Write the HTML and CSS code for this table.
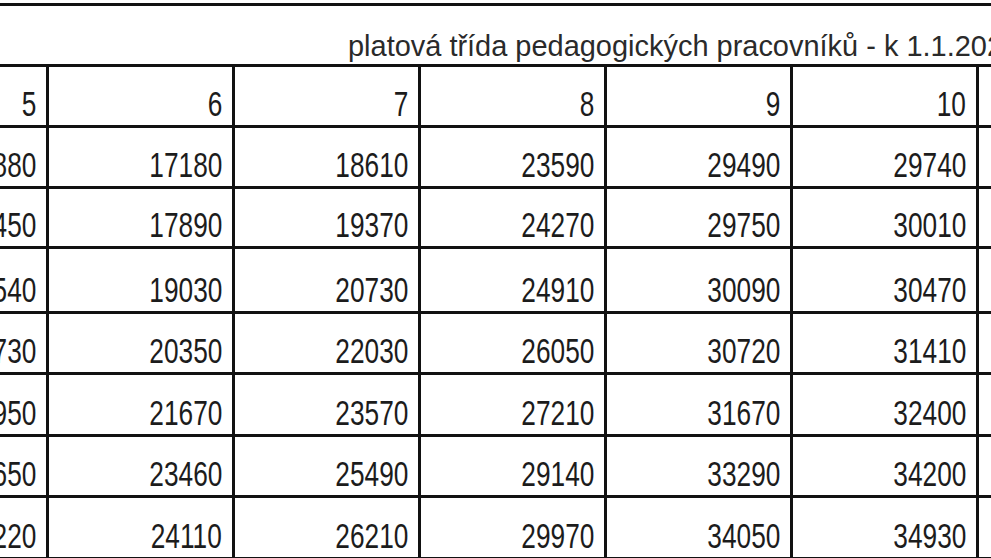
FILE: index.html
```html
<!DOCTYPE html>
<html lang="cs">
<head>
<meta charset="utf-8">
<title>Platové třídy</title>
<link rel="stylesheet" href="styles.css">
</head>
<body>
<div class="sheet">
  <div class="title"><span class="ttext">platová třída pedagogických pracovníků - k 1.1.2024</span></div>

  <div class="row r-head">
    <div class="c"><span>5</span></div><div class="c"><span>6</span></div><div class="c"><span>7</span></div><div class="c"><span>8</span></div><div class="c"><span>9</span></div><div class="c"><span>10</span></div><div class="c"><span>11</span></div>
  </div>
  <div class="row r1">
    <div class="c"><span>15880</span></div><div class="c"><span>17180</span></div><div class="c"><span>18610</span></div><div class="c"><span>23590</span></div><div class="c"><span>29490</span></div><div class="c"><span>29740</span></div><div class="c"><span>31070</span></div>
  </div>
  <div class="row r2">
    <div class="c"><span>16450</span></div><div class="c"><span>17890</span></div><div class="c"><span>19370</span></div><div class="c"><span>24270</span></div><div class="c"><span>29750</span></div><div class="c"><span>30010</span></div><div class="c"><span>31400</span></div>
  </div>
  <div class="row r3">
    <div class="c"><span>17540</span></div><div class="c"><span>19030</span></div><div class="c"><span>20730</span></div><div class="c"><span>24910</span></div><div class="c"><span>30090</span></div><div class="c"><span>30470</span></div><div class="c"><span>31900</span></div>
  </div>
  <div class="row r4">
    <div class="c"><span>18730</span></div><div class="c"><span>20350</span></div><div class="c"><span>22030</span></div><div class="c"><span>26050</span></div><div class="c"><span>30720</span></div><div class="c"><span>31410</span></div><div class="c"><span>32980</span></div>
  </div>
  <div class="row r5">
    <div class="c"><span>19950</span></div><div class="c"><span>21670</span></div><div class="c"><span>23570</span></div><div class="c"><span>27210</span></div><div class="c"><span>31670</span></div><div class="c"><span>32400</span></div><div class="c"><span>34020</span></div>
  </div>
  <div class="row r6">
    <div class="c"><span>21650</span></div><div class="c"><span>23460</span></div><div class="c"><span>25490</span></div><div class="c"><span>29140</span></div><div class="c"><span>33290</span></div><div class="c"><span>34200</span></div><div class="c"><span>35880</span></div>
  </div>
  <div class="row r7">
    <div class="c"><span>22220</span></div><div class="c"><span>24110</span></div><div class="c"><span>26210</span></div><div class="c"><span>29970</span></div><div class="c"><span>34050</span></div><div class="c"><span>34930</span></div><div class="c"><span>36650</span></div>
  </div>
</div>
</body>
</html>
```

FILE: styles.css
```css
html, body {
  margin: 0;
  padding: 0;
  background: #ffffff;
  overflow: hidden;
  width: 991px;
  height: 558px;
}

.sheet {
  margin-top: 3px;
  width: 1200px;
  border-top: 3px solid #111111;
  font-family: "Liberation Sans", Arial, sans-serif;
  color: #1c1c1c;
}

.title {
  height: 61px;
  box-sizing: border-box;
  border-bottom: 3px solid #111111;
  display: flex;
  align-items: flex-end;
  padding-left: 348px;
  white-space: nowrap;
  overflow: hidden;
}

.ttext {
  display: inline-block;
  font-size: 30px;
  line-height: normal;
  padding-bottom: 1px;
  color: #2a2a2a;
  transform: scaleX(0.965);
  transform-origin: left bottom;
}

.row {
  display: grid;
  grid-template-columns: 49px repeat(5, 186px) 186px;
}

.r-head { height: 61px; }
.r1 { height: 61px; }
.r2 { height: 60px; }
.r3 { height: 65px; }
.r4 { height: 61px; }
.r5 { height: 62px; }
.r6 { height: 61px; }
.r7 { height: 62px; }

.c {
  box-sizing: border-box;
  border-right: 3px solid #111111;
  border-bottom: 3px solid #111111;
  display: flex;
  justify-content: flex-end;
  align-items: flex-end;
  padding-right: 10px;
  overflow: hidden;
  white-space: nowrap;
}

.c span {
  display: inline-block;
  font-size: 35px;
  line-height: normal;
  padding-bottom: 1px;
  transform: scaleX(0.75);
  transform-origin: right bottom;
}
```
